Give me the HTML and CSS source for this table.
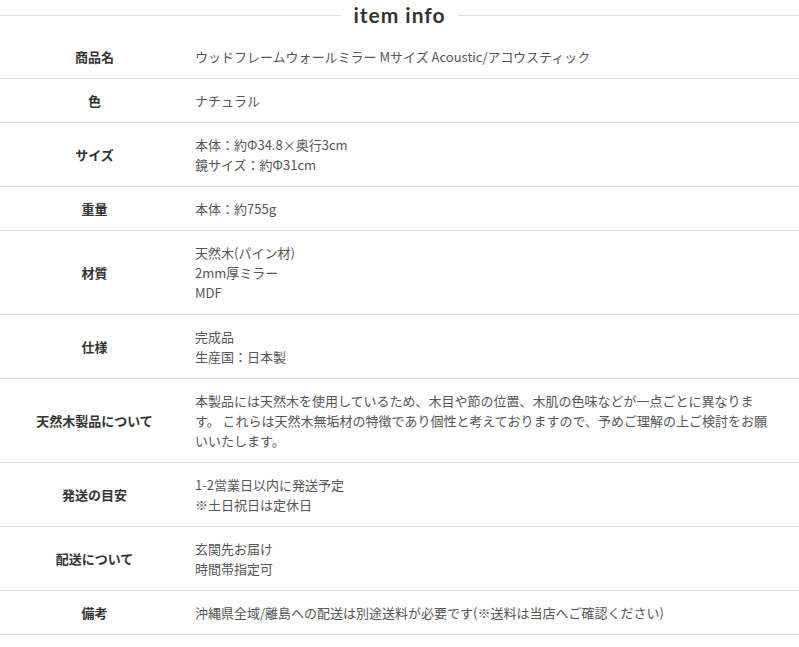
FILE: index.html
```html
<!DOCTYPE html>
<html lang="ja">
<head>
<meta charset="utf-8">
<title>item info</title>
<link rel="stylesheet" href="styles.css">
</head>
<body>
<div class="item-info">
  <h2 class="title"><span class="title-text">item info</span></h2>
  <div class="spec">
    <div class="row"><div class="label">商品名</div><div class="value">ウッドフレームウォールミラー Mサイズ Acoustic/アコウスティック</div></div>
    <div class="row"><div class="label">色</div><div class="value">ナチュラル</div></div>
    <div class="row"><div class="label">サイズ</div><div class="value">本体：約Φ34.8×奥行3cm<br>鏡サイズ：約Φ31cm</div></div>
    <div class="row"><div class="label">重量</div><div class="value">本体：約755g</div></div>
    <div class="row"><div class="label">材質</div><div class="value">天然木(パイン材)<br>2mm厚ミラー<br>MDF</div></div>
    <div class="row"><div class="label">仕様</div><div class="value">完成品<br>生産国：日本製</div></div>
    <div class="row"><div class="label">天然木製品について</div><div class="value">本製品には天然木を使用しているため、木目や節の位置、木肌の色味などが一点ごとに異なります。 これらは天然木無垢材の特徴であり個性と考えておりますので、予めご理解の上ご検討をお願いいたします。</div></div>
    <div class="row"><div class="label">発送の目安</div><div class="value">1-2営業日以内に発送予定<br>※土日祝日は定休日</div></div>
    <div class="row"><div class="label">配送について</div><div class="value">玄関先お届け<br>時間帯指定可</div></div>
    <div class="row"><div class="label">備考</div><div class="value">沖縄県全域/離島への配送は別途送料が必要です(※送料は当店へご確認ください)</div></div>
  </div>
</div>
</body>
</html>
```

FILE: styles.css
```css
html, body {
  margin: 0;
  padding: 0;
  background: #fff;
}
body {
  font-family: "Noto Sans CJK JP", "Noto Sans", sans-serif;
  font-size: 13px;
  color: #555;
}
.title {
  display: flex;
  align-items: center;
  height: 30px;
  margin: 0 0 5px;
  font-weight: normal;
}
.title::before,
.title::after {
  content: "";
  flex: 1;
  height: 1px;
  background: #ddd;
}
.title-text {
  padding: 0 12px;
  font-family: "Lato", "Noto Sans", sans-serif;
  font-weight: 700;
  font-size: 21px;
  letter-spacing: 1px;
  color: #333;
  line-height: 30px;
}
.row {
  display: grid;
  grid-template-columns: 189px 1fr;
  align-items: center;
  border-bottom: 1px solid #ddd;
  padding: 12px 0 11px;
  line-height: 20px;
}
.label {
  text-align: center;
  font-weight: 700;
  color: #333;
}
.value {
  padding: 0 24px 0 6px;
  color: #555;
}
```
